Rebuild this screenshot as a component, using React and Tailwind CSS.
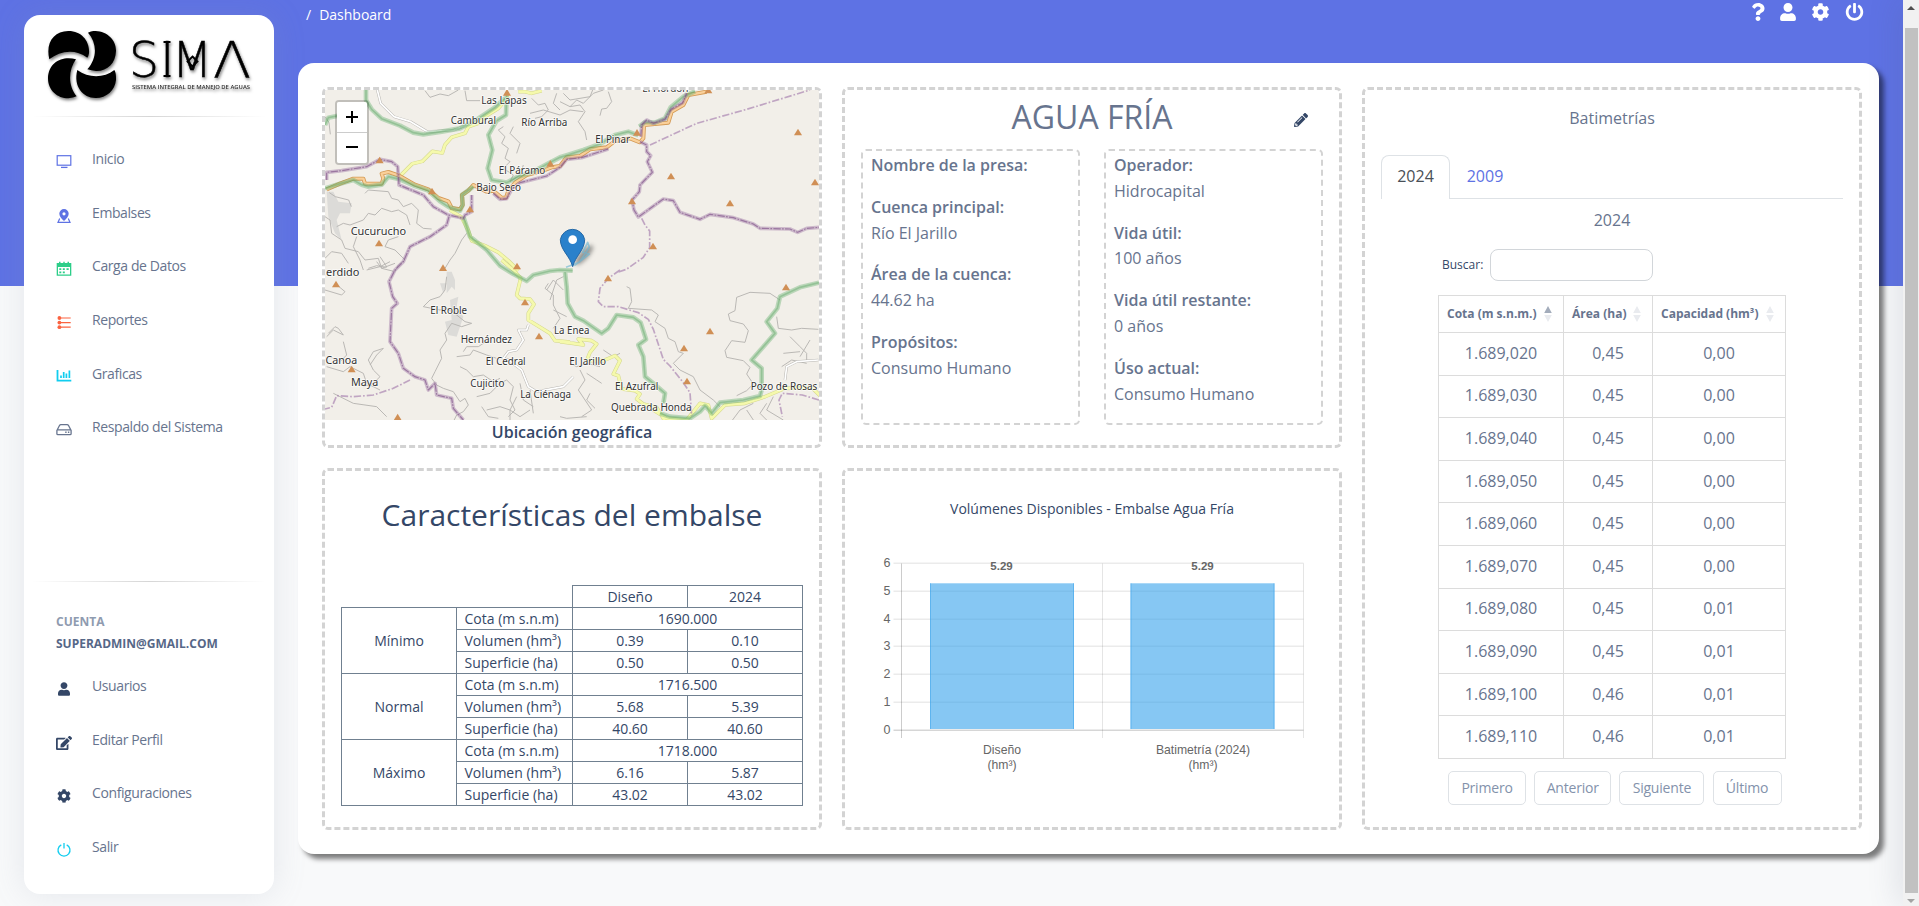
import React from "react";
import { FaQuestion, FaUser, FaCog, FaPowerOff, FaPencilAlt, FaEdit } from "react-icons/fa";

function Logo() {
  return (
    <svg viewBox="0 0 250 90" className="block h-[90px] w-[250px] shrink-0" style={{ filter: "drop-shadow(1.5px 2px 1.5px rgba(0,0,0,.5))" }}>
      <g transform="translate(-24 -15) scale(.33333)">
        <path d="M148 178C136 128 162 93 205 93C246 93 270 125 267 160Q266 168 262 173C225 145 180 152 148 178Z" />
        <path d="M264 98C274 93 280 93 287 93C322 94 349 121 348 153C347 190 322 214 288 213Q274 212 262 208C292 175 292 130 264 98Z" />
        <path d="M228 178C190 166 145 185 144 235C144 270 172 295 205 295Q220 294 230 289C203 257 205 210 228 178Z" />
        <path d="M232 210C265 235 312 235 343 210C349 218 348 235 348 240C345 272 318 295 286 294C250 294 219 260 232 210Z" />
      </g>
      <g fontFamily="'DejaVu Sans',sans-serif" fontWeight="200" fontSize="49" fill="#000" stroke="#000" strokeWidth=".5">
        <text x="105" y="62" textLength="30" lengthAdjust="spacingAndGlyphs">S</text>
        <text x="136" y="62">I</text>
        <text x="148" y="62" textLength="40" lengthAdjust="spacingAndGlyphs">M</text>
        <text x="189" y="62" textLength="38" lengthAdjust="spacingAndGlyphs">Λ</text>
      </g>
      <path d="M139.500 27h7M139.500 61h7M168.500 41.500l5 5-5 5-5-5z" fill="none" stroke="#000" strokeWidth="1.800" />
      <text x="108" y="74" textLength="118" lengthAdjust="spacingAndGlyphs" fontFamily="'Open Sans',sans-serif" fontWeight="600" fontSize="5.400" fill="#333">SISTEMA INTEGRAL DE MANEJO DE AGUAS</text>
    </svg>
  );
}

const Ico = ({ children, className }) => (
  <svg viewBox="0 0 16 16" className={"h-4 w-4 " + className} fill="none" stroke="currentColor">{children}</svg>
);

const menu = [
  ["Inicio", <Ico className="text-[#5e72e4]"><rect x="1.200" y="1.700" width="13.600" height="9.500" strokeWidth="1.200" /><path d="M5 13.400h6.500" strokeWidth="1.300" /></Ico>],
  ["Embalses", <Ico className="text-[#5e72e4]"><path fill="currentColor" stroke="none" fillRule="evenodd" d="M8 1a4.700 4.700 0 0 1 4.700 4.700C12.700 8.500 10 11 8 13 6 11 3.300 8.500 3.300 5.700A4.700 4.700 0 0 1 8 1zm0 3.200a1.600 1.600 0 1 0 0 3.200 1.600 1.600 0 0 0 0-3.200z" /><path d="M3.700 10.500 2 14.400h12l-1.700-3.900" strokeWidth="1.200" /></Ico>],
  ["Carga de Datos", <Ico className="text-[#2dce89]"><path stroke="none" fill="currentColor" fillRule="evenodd" d="M.7 2H3V.7h1.500V2h2.800V.7h1.400V2h2.800V.7H13V2h2.300v12.700H.7zM2 6v7.400h12V6z" /><path d="M3.300 8.200h2M6.800 8.200h2M10.500 8.200h2.200M3.300 11.300h2M6.800 11.300h2" strokeWidth="1.800" /></Ico>],
  ["Reportes", <Ico className="text-[#fb6340]"><g fill="currentColor" stroke="none"><circle cx="3.400" cy="3" r="1.900" /><circle cx="3.400" cy="7.600" r="1.900" /><circle cx="3.400" cy="12.200" r="1.900" /></g><path d="M3 3h11.700M3 7.600h11.700M3 12.200h11.700" strokeWidth="1.200" /></Ico>],
  ["Graficas", <Ico className="text-[#11cdef]"><path d="M1.500 1v10.600h13.800" strokeWidth="1.800" /><path d="M5 9V6.500M7.700 9V3M10.400 9V4.500M13.400 9V1.500" strokeWidth="1.700" /></Ico>],
  ["Respaldo del Sistema", <Ico className="text-[#67748e]"><path d="M.9 8.500 3.600 3.300Q4 2.700 4.800 2.700h6.400q.8 0 1.200.6l2.700 5.200v3.200q0 1-1 1H1.900q-1 0-1-1zM1 7.900h14" strokeWidth="1.300" /><path d="M9.200 10.300h1.400M11.900 10.300h1.400" strokeWidth="1.500" /></Ico>],
];
const account = [
  ["Usuarios", <FaUser className="h-3.5 w-3 text-[#344767]" />],
  ["Editar Perfil", <FaEdit className="h-4 w-4 text-[#344767]" />],
  ["Configuraciones", <FaCog className="h-[14px] w-[14px] text-[#344767]" />],
  ["Salir", <Ico className="text-[#11cdef]"><path d="M5.300 2.800a6 6 0 1 0 5.400 0M8 1v5.500" strokeWidth="1.300" /></Ico>],
];

function NavList({ items }) {
  return (
    <ul className="flex flex-col">
      {items.map(([label, icon]) => (
        <li key={label} className="flex h-[53.600px] items-start pl-8 text-sm tracking-[-0.4px] text-[#67748e]">
          <span className="mt-[18.300px] flex h-4 w-4 items-center justify-center">{icon}</span>
          <span className="ml-5 mt-[13.200px] leading-5">{label}</span>
        </li>
      ))}
    </ul>
  );
}

const Divider = () => <div className="mx-2 h-px shrink-0 bg-[linear-gradient(90deg,transparent,rgba(0,0,0,.16),transparent)]" />;

function Sidebar() {
  return (
    <aside className="ml-6 mt-[15px] flex h-[879px] w-[250px] shrink-0 flex-col rounded-2xl bg-white shadow-[0_0_32px_rgba(136,152,170,.18)]">
      <Logo />
      <div className="h-[11px]" />
      <Divider />
      <div className="pt-[19px]"><NavList items={menu} /></div>
      <div className="h-[123px]" />
      <Divider />
      <div className="mt-[29px] pl-8 text-xs font-bold uppercase leading-[22.500px]">
        <p className="text-[#8f9bb0]">Cuenta</p>
        <p className="text-[#566787]">superadmin@gmail.com</p>
      </div>
      <div className="mt-[7.300px]"><NavList items={account} /></div>
    </aside>
  );
}

/* Terrain layers, three drawing units per pixel */
const tracks = [
  "M75 140l12 18 4 35M88 368l18 12 40 10 8 20M195 370l10-10 60 5 10 20 20 5 15 20 25-10 20 20-5 40 20 15 25 2M110 470l20-10 20 5 40-15 15-20 20 5 20-20 30 10 20-5 25 15 10 30M75 440l15 10 5 40 30 20 10 25 40 10 20 25 40-5 10 30 40 10 10-20 20-15-30-30-30-10 10-20 30-10M75 565l20-20 30 5 20 30M170 500l-10 30 20 40 10 30M240 560l20 30M500 490l-15 20-20 40-15 20-15 25",
  "M375 62l15 20 30-10 25 5 30-17M695 85l20 20 20-5 10 20-20 20-20 5M610 170l-15 10 20 20-10 20 20 15-10 30 15 10-20 20 30 20-10 20 30-20 10-30M640 170l-10 20 30 30-10 30M780 120l-20-20 10-30M780 95l30 15 20-20 20 10 30-30 30-10M810 110l30-5 15 20-20 30 20 30 5 25M690 130l40-10 50 15 30-15 40 5M925 65l10 30-15 20-15 2-5 20M790 70l20 20 60-10 10-25",
  "M495 62l5 30 40 0M440 620l-5 40-15 20-30 10-20 20 50 10 20-5 30 20 25 20 20 5-30 10-30-10-20 30 5 20-20 30 5 25-20 40-10 20 15 20 20 10 30 10 20 30 15-10 10 20-15 20-20 10-15 30M490 845l10-15 35 0 30-20M470 860l40-5 10-15 40 15 30 10M480 890l20 10 20 20 30-5 30 20 20-10M530 980l40-10 30-30 20-10 20 20-10 40 15 30-20 20M560 1020l40-10 30 10 0 30M545 1010l20 30 30 5M650 980l-20 40 30 20 30-20M660 940l10 50 30 20M690 960l10 70M750 690l20-60 20-10M745 640l-10 15 25 20 0 30 20 40-20 30M760 720l40 20M790 660l-30-30-20 30",
  "M80 800l20-20 30 15-15-20-10-5-20 20M210 885l20-30 20-20-30 10-15 25 15 30 20 20-20 20-30 10M80 890l50 15 20-15 40 20 10 30 40 20M130 815l10 40-20 20-30-15M100 970l60 30 70 10 30 30M75 660l50 15 10-10-30-25M205 595l25-8 30 5M200 600l40-10 30-15M230 575l15 20 40-15",
  "M980 650l10 5 5 40-10 20 70 5 20 15-10 20 30 20 10 30 20 10 10 30 15 5-20 20-10 10 20 20 40 20 20 40 40 30 20 20M1440 690l-30-20-60-3-40 15-5 40-20 10 5 20 40 10 15 20-10 35-40-5-20 30 5 20 50 10 20 20-10 20 20 30-20 20-30 15M1430 740l5 35 40 5 30-5 50 3M1470 800l30 30 20 20 0 20M1445 890l30-20 45 10M1450 850l50-5M1500 860l30-50M1400 1000l-20 30 20 20M1360 1000l-40 20-30 40M1420 980l-20 40 50 30M1340 1020l20 30M810 880l20 10 30-10 40 10M840 900l15 30-20 30 40 60-30 20M860 910l30 20 15 10M870 970l-10 20 25 25M780 1040l20 5 60-5M910 840l30 20 20-10",
];
const greens = [
  "M75 165L85 143L110 138L160 128L198 116M198 60L198 90L215 118L245 146L300 167L340 188L370 193L425 185L480 175L525 152L585 112L615 85",
  "M620 75L618 135L590 152L565 195L577 240L563 295L575 330L620 338L650 322L700 305L740 283L780 262L800 256L850 240L900 222L945 195L985 185L1015 196M1018 170L1035 156L1065 158L1095 145L1112 112L1150 80L1185 64",
  "M75 355L120 341L160 330L185 344L205 350L245 344L265 320L300 328L345 348L385 362L420 394L448 412L480 422L488 405L486 375L520 350M490 440L510 500L560 540L600 587L640 612L680 633L700 615L750 603L780 600L818 602M795 606L800 650L803 700L825 740L850 752L905 790L925 775L950 735L1000 742L1022 758L1038 808L1015 825L1030 860L1035 920L1060 940L1095 970L1090 1000",
  "M1080 1030L1110 1040L1170 1045L1200 1025L1215 1008L1225 1018L1235 1030L1260 998L1330 990L1380 978L1385 960L1385 895L1355 870L1390 830L1425 790L1400 755L1432 715L1440 680L1500 652L1557 638",
];
const yellows = [
  "M655 65l20 0 20 5 30-8M625 80l-30 35-40 25-20 20-30 10-10 20-40 12-20 22-8 25-30-5-30 30-30 7-20 20-15 15M450 420l35 22 20 40 10 30 40 15 40 20 30 25 30 30M605 570L640 600L662 625L650 675L660 685L690 687L702 703L685 730L685 750L750 790L765 812L810 816M780 815l40 5 30 5-15-18 40 5 15 10-20 25-10 25 50 0 35-15 15 15-20 40 15 5 10 40 40 5 15 10-10 15 20 15 40 10 30 50M1060 1020l40 25 60 5 40-50 25 5 10 40 40-40 60-5 60-20 60-25 80-3 30 30 40 30",
];
const oranges = ["M80 358L120 341L160 326L190 326L195 341L245 341L250 326L245 311L265 306L295 316L345 344L385 358L415 384L445 394L455 414L480 418L488 405L486 375L505 362L520 345L560 365L580 362L605 383L618 383L625 362L645 338L680 315L735 300L755 292L780 288L800 262L840 258L870 238L920 232L945 213L990 205L1020 217L1030 205L1032 165L1105 158L1115 125L1150 105L1165 75L1220 65"];
const purples = [
  "M80 330L80 307L125 302L200 290L240 268L275 275L293 290L297 345L370 375L400 410L445 435L490 445L495 435L515 425L515 375M447 440L440 465L390 500L330 530L310 575L285 600L267 635L278 680L292 700L275 715L270 815L295 850L310 895L345 920L375 930L385 960L405 940L410 975L455 985L460 1015L490 1050",
  "M580 370L600 388L620 386L635 358L660 338L740 318L780 292L800 268L845 263L925 237M1022 200L1025 165L1040 150L1060 160L1095 148L1113 118L1148 98L1160 70",
  "M1020 215L1040 225L1040 245L1052 257L1042 275L1057 307L1020 345L1018 365L996 390L1002 420L1015 441L1065 405L1090 387L1120 392L1140 427L1200 448L1230 433L1300 443L1360 462L1380 475L1470 477L1493 487L1520 475L1557 472",
];
const dashed = [
  "M1050 225L1190 160L1340 118L1530 60M1025 445l10 20 14 18 0 50-20 30-50 35-30 10M960 600l-35 25-25 30-5 40 15 15 45 0 60 18 30 20 15 30 30 90 20 20 40 50 20 30 5 70M330 930l-50 25-60 20-60 5-50-3-15 35-20 5M1557 990l-50-15-60-5-10 20 10 50",
];
const peaks = [[621, 67], [239, 270], [396, 363], [510, 417], [751, 280], [237, 519], [429, 593], [651, 588], [1011, 187], [1225, 60], [1494, 186], [1113, 318], [996, 393], [1290, 399], [1545, 336], [1059, 528], [108, 642], [675, 696], [717, 798], [155, 897], [293, 1041], [924, 624], [1458, 651], [1230, 783], [1152, 834], [1161, 933]];
const places = [["Las Lapas", 612, 91, 136], ["Cambural", 520, 150, 136], ["Río Arriba", 733, 157, 138], ["El Páramo", 666, 302, 140], ["Bajo Seco", 596, 353, 134], ["Cucurucho", 235, 484, 166], ["El Hordón", 1096, 55, 138], ["El Pinar", 938, 207, 104], ["erdido", 128, 608, 100], ["El Roble", 446, 721, 110], ["Hernández", 559, 808, 154], ["Canoa", 124, 871, 95], ["Maya", 194, 938, 82], ["El Cedral", 617, 873, 120], ["Cujicito", 562, 939, 102], ["La Ciénaga", 737, 974, 153], ["La Enea", 815, 782, 106], ["El Jarillo", 863, 873, 110], ["El Azufral", 1010, 949, 130], ["Quebrada Honda", 1054, 1011, 242], ["Pozo de Rosas", 1452, 948, 200]];

function MapView() {
  return (
    <div className="relative h-[330px] w-full overflow-hidden rounded-t-[2px]">
      <svg viewBox="75 60 1482 990" className="block h-[330px] w-[494px]" fill="none" strokeLinejoin="round">
        <rect x="75" y="60" width="1482" height="990" fill="#f2efe9" />
        <g fill="#dcdbd8"><path d="M80 365l20 0 15 30 40 5-5 30-30 0-10 20 15 60-20-20-20-50zM440 605l15 0 10 25 0 30-10-10-15 20zM450 690l25-10-5 30 20 30-20 60-25-5-10-40 20-5zM420 640l20 0-10 30z" /></g>
        <g stroke="#b6b4b0" strokeWidth="2.800">{tracks.map((d, i) => <path key={i} d={d} />)}</g>
        <path d="M232 60l10 40 40 40 50 15 50 30 80-5 40-15M685 765l-5 15-25 0 15 30-20 30-25 5-15 20 15 5 40 30 20 50 25 15 80-15 30-30M1455 930l5-40 30-15 65-5" stroke="#b9b7b3" strokeWidth="8" />
        <path d="M232 60l10 40 40 40 50 15 50 30 80-5 40-15M685 765l-5 15-25 0 15 30-20 30-25 5-15 20 15 5 40 30 20 50 25 15 80-15 30-30M1455 930l5-40 30-15 65-5" stroke="#fff" strokeWidth="5" />
        {yellows.map((d, i) => <g key={i}><path d={d} stroke="#d3d68d" strokeWidth="11" /><path d={d} stroke="#f5f9ac" strokeWidth="8" /></g>)}
        {oranges.map((d, i) => <g key={i}><path d={d} stroke="#d39a55" strokeWidth="12" /><path d={d} stroke="#fad09a" strokeWidth="7" /></g>)}
        {greens.map((d, i) => <g key={i}><path d={d} stroke="#6db374" strokeOpacity=".42" strokeWidth="14" /><path d={d} stroke="#5da565" strokeOpacity=".4" strokeWidth="5" /></g>)}
        {purples.map((d, i) => <g key={i}><path d={d} stroke="#9b6fa2" strokeOpacity=".42" strokeWidth="11" /><path d={d} stroke="#805288" strokeOpacity=".65" strokeWidth="3.500" strokeDasharray="22 4 5 4" /></g>)}
        {dashed.map((d, i) => <path key={i} d={d} stroke="#a57dad" strokeOpacity=".65" strokeWidth="5" strokeDasharray="22 6 5 6" />)}
        {peaks.map(([x, y]) => <path key={x + "-" + y} d={`M${x} ${y - 10}l12 20h-24z`} fill="#d08f55" />)}
        <g fontFamily="'Noto Sans',sans-serif" fontSize="30" fill="#333" stroke="#fff" strokeOpacity=".75" strokeWidth="5" textAnchor="middle" style={{ paintOrder: "stroke" }}>
          {places.map(([t, x, y, w]) => <text key={t} x={x} y={y + 11} textLength={w} lengthAdjust="spacingAndGlyphs">{t}</text>)}
        </g>
        <g>
          <ellipse cx="852" cy="555" rx="38" ry="13" transform="rotate(-48 852 555)" fill="#000" fillOpacity=".38" style={{ filter: "blur(7px)" }} />
          <path d="M798 592l40-15 30-45-5-15-15 30 20 5-25 20-20 15" stroke="#6fb5d1" strokeWidth="5" strokeOpacity=".65" />
          <path d="M818 590C810 558 781 540 781 509a37 37 0 0 1 73 0C854 540 826 558 818 590Z" fill="#2a81cb" stroke="#2568a5" strokeWidth="3" />
          <circle cx="818" cy="509" r="13" fill="#fff" />
        </g>
      </svg>
      <div className="absolute left-2.5 top-2.5 flex w-[34px] flex-col rounded border-2 border-black/20 bg-clip-padding">
        <span className="flex h-[31px] items-center justify-center rounded-t-[2px] border-b border-[#ccc] bg-white">
          <svg viewBox="0 0 12 12" className="h-3 w-3"><path d="M0 6h12M6 0v12" stroke="#000" strokeWidth="2" /></svg>
        </span>
        <span className="flex h-[30px] items-center justify-center rounded-b-[2px] bg-white">
          <svg viewBox="0 0 12 12" className="h-3 w-3"><path d="M0 5h12" stroke="#000" strokeWidth="2" /></svg>
        </span>
      </div>
    </div>
  );
}

function InfoBox({ items }) {
  return (
    <div className="h-[276px] w-[219px] rounded-[5px] border-2 border-dashed border-[#d3d3d3] pl-2 pt-[2px] text-base leading-[25.800px] text-[#67748e]">
      {items.map(([k, v]) => (
        <div key={k} className="mb-4">
          <p className="font-semibold">{k}</p>
          {v && <p>{v}</p>}
        </div>
      ))}
    </div>
  );
}

const levels = [
  ["Mínimo", "1690.000", "0.39", "0.10", "0.50", "0.50"],
  ["Normal", "1716.500", "5.68", "5.39", "40.60", "40.60"],
  ["Máximo", "1718.000", "6.16", "5.87", "43.02", "43.02"],
];

function LevelsTable() {
  const c = "border border-[#708090] p-0 h-[22px]";
  return (
    <table className="mx-4 mt-[50px] w-[462px] table-fixed border-collapse text-center text-sm leading-[21px] text-[#344767]">
      <colgroup><col className="w-[115px]" /><col className="w-[116px]" /><col className="w-[115px]" /><col className="w-[115px]" /></colgroup>
      <tbody>
        <tr><td className="h-[22px] p-0" colSpan={2} /><td className={c}>Diseño</td><td className={c}>2024</td></tr>
        {levels.map(([n, cota, v1, v2, s1, s2]) => (
          <React.Fragment key={n}>
            <tr><td rowSpan={3} className={c}>{n}</td><td className={c + " pl-[7.500px] text-left"}>Cota (m s.n.m)</td><td colSpan={2} className={c}>{cota}</td></tr>
            <tr><td className={c + " pl-[7.500px] text-left"}>Volumen (hm³)</td><td className={c}>{v1}</td><td className={c}>{v2}</td></tr>
            <tr><td className={c + " pl-[7.500px] text-left"}>Superficie (ha)</td><td className={c}>{s1}</td><td className={c}>{s2}</td></tr>
          </React.Fragment>
        ))}
      </tbody>
    </table>
  );
}

function VolumeChart() {
  return (
    <svg viewBox="845 545 494 250" className="block h-[250px] w-[494px]" fontFamily="'Liberation Sans',Arial,sans-serif" fontSize="12" fill="#666">
      {[0, 1, 2, 3, 4, 5, 6].map((n) => {
        const y = Math.round(729.5 - n * 27.67) + 0.3;
        return (
          <g key={n}>
            <path d={`M893.500 ${y}H1303.500`} stroke="#000" strokeOpacity={n ? 0.08 : 0.16} strokeWidth="1.400" />
            <text x="890.500" y={y + 3.400} textAnchor="end" fontSize="12.500">{n}</text>
          </g>
        );
      })}
      <path d="M901.500 563.500V738" stroke="#000" strokeOpacity=".2" />
      <path d="M1102.500 563.500V738M1303.500 563.500V738" stroke="#000" strokeOpacity=".1" />
      {[930, 1130.5].map((x) => (
        <g key={x}>
          <rect x={x} y="583.300" width="144" height="145.700" fill="#36a2eb" fillOpacity=".6" />
          <path d={`M${x + 0.5} 583.300V729M${x + 143.5} 583.300V729`} stroke="#36a2eb" strokeOpacity=".5" />
        </g>
      ))}
      <g textAnchor="middle">
        <g fontWeight="bold" fontSize="11.500"><text x="1001.500" y="570">5.29</text><text x="1202.500" y="570">5.29</text></g>
        <g fontSize="12.200">
          <text x="1002" y="753.500">Diseño</text><text x="1002" y="769">(hm³)</text>
          <text x="1203" y="753.500">Batimetría (2024)</text><text x="1203" y="769">(hm³)</text>
        </g>
      </g>
    </svg>
  );
}

const bathymetry = [
  ["1.689,020", "0,45", "0,00"], ["1.689,030", "0,45", "0,00"], ["1.689,040", "0,45", "0,00"], ["1.689,050", "0,45", "0,00"],
  ["1.689,060", "0,45", "0,00"], ["1.689,070", "0,45", "0,00"], ["1.689,080", "0,45", "0,01"], ["1.689,090", "0,45", "0,01"],
  ["1.689,100", "0,46", "0,01"], ["1.689,110", "0,46", "0,01"],
];

const Sort = ({ active }) => (
  <svg viewBox="0 0 8 18" className="h-[18px] w-2">
    <path d="M4 1l3.800 7H.2z" fill={active ? "#a3acbb" : "#e9ebef"} />
    <path d="M4 17l3.800-7H.2z" fill="#e9ebef" />
  </svg>
);

function Bathymetries() {
  const td = "border border-[#dcdcdc] p-0";
  const btn = "flex items-center justify-center rounded-[5px] border border-[#dee2e6] tracking-[-0.2px] ";
  return (
    <section className="flex h-[743px] w-[500px] flex-col rounded-[6px] border-[3px] border-dashed border-[#d3d3d3] px-4 text-base text-[#67748e]">
      <h3 className="mt-[16px] text-center leading-6">Batimetrías</h3>
      <div className="mt-[25px] flex h-11 border-b border-[#dee2e6]">
        <span className="-mb-px flex h-11 w-[69px] items-center justify-center rounded-t-lg border border-b-0 border-[#dee2e6] bg-white pb-[3px] text-[#495057]">2024</span>
        <span className="flex h-[42px] w-[70px] items-center justify-center text-[#5e72e4]">2009</span>
      </div>
      <p className="mt-[9px] text-center leading-6">2024</p>
      <label className="ml-[61px] mt-[17px] flex h-8 items-center text-xs text-[#344767]">
        Buscar:
        <input className="ml-[7px] h-8 w-[163px] rounded-lg border border-[#d2d6da] bg-white" />
      </label>
      <table className="ml-[57px] mt-[14px] w-[348px] shrink-0 table-fixed border-collapse text-center">
        <colgroup><col className="w-[125px]" /><col className="w-[89px]" /><col className="w-[133px]" /></colgroup>
        <thead>
          <tr className="h-[37px] text-xs font-bold">
            {["Cota (m s.n.m.)", "Área (ha)", "Capacidad (hm³)"].map((t, i) => (
              <th key={t} className={td}>
                <span className="flex items-center justify-between pl-2 pr-[11px]">{t}<Sort active={i === 0} /></span>
              </th>
            ))}
          </tr>
        </thead>
        <tbody>
          {bathymetry.map((r) => (
            <tr key={r[0]} className="h-[42.600px]">{r.map((v, i) => <td key={i} className={td + " pb-[2px]"}>{v}</td>)}</tr>
          ))}
        </tbody>
      </table>
      <div className="ml-[67px] mt-3 flex h-[34px] gap-[8.200px] text-sm text-[#8392ab]">
        <span className={btn + "w-[78px]"}>Primero</span>
        <span className={btn + "w-[77px]"}>Anterior</span>
        <span className={btn + "w-[85px]"}>Siguiente</span>
        <span className={btn + "w-[69px]"}>Último</span>
      </div>
    </section>
  );
}

const panel = "w-[500px] rounded-[6px] border-[3px] border-dashed border-[#d3d3d3]";

export default function App() {
  return (
    <div className="flex h-[906px] w-full overflow-hidden bg-[linear-gradient(#5e72e4_286px,#f8f9fa_286px)] font-['Open_Sans',sans-serif]">
      <Sidebar />
      <main className="ml-6 flex w-[1581px] shrink-0 flex-col">
        <header className="flex h-[63px] justify-between pl-2 pr-[15px] text-sm text-white">
          <p className="flex gap-2 pt-[5px] leading-5"><span>/</span><span>Dashboard</span></p>
          <div className="flex h-6 items-center gap-[14px] text-[18px]">
            <FaQuestion className="w-[14px]" />
            <FaUser className="w-[18px]" />
            <FaCog className="w-[19px]" />
            <FaPowerOff className="ml-[1px] w-[19px]" />
          </div>
        </header>
        <div className="flex h-[791px] gap-5 rounded-2xl bg-white pl-6 pt-6 shadow-[5px_5px_5px_rgba(0,0,0,.5)]">
          <div className="grid grid-cols-2 grid-rows-[361px_362px] gap-5">
            <section className={panel}>
              <MapView />
              <p className="text-center text-base font-semibold leading-6 text-[#344767]">Ubicación geográfica</p>
            </section>
            <section className={panel + " px-4"}>
              <div className="flex h-[59px] items-start">
                <span className="w-[30px]" />
                <h1 className="flex-1 pt-[5px] text-center text-[32px] leading-[44px] text-[#67748e]">AGUA FRÍA</h1>
                <FaPencilAlt className="mr-[14px] mt-[23px] h-[14px] w-4 text-[#344767]" />
              </div>
              <div className="flex justify-between">
                <InfoBox items={[["Nombre de la presa:", ""], ["Cuenca principal:", "Río El Jarillo"], ["Área de la cuenca:", "44.62 ha"], ["Propósitos:", "Consumo Humano"]]} />
                <InfoBox items={[["Operador:", "Hidrocapital"], ["Vida útil:", "100 años"], ["Vida útil restante:", "0 años"], ["Úso actual:", "Consumo Humano"]]} />
              </div>
            </section>
            <section className={panel}>
              <h2 className="mt-[24px] text-center text-[30px] leading-10 text-[#344767]">Características del embalse</h2>
              <LevelsTable />
            </section>
            <section className={panel}>
              <h2 className="mt-[26px] text-center text-sm leading-6 text-[#344767]">Volúmenes Disponibles - Embalse Agua Fría</h2>
              <div className="mt-[24px]"><VolumeChart /></div>
            </section>
          </div>
          <Bathymetries />
        </div>
      </main>
      <div className="ml-auto flex w-4 flex-col items-center bg-[#f1f1f1] shadow-[0_0_32px_rgba(80,90,120,.25)]">
        <svg viewBox="0 0 16 28" className="h-7 w-4"><path d="M8 6l4 4H4z" fill="#505050" /></svg>
        <div className="h-[865px] w-[13px] bg-[#c1c1c1]" />
        <svg viewBox="0 0 16 13" className="h-[13px] w-4"><path d="M8 10l4-4H4z" fill="#a3a3a3" /></svg>
      </div>
    </div>
  );
}
